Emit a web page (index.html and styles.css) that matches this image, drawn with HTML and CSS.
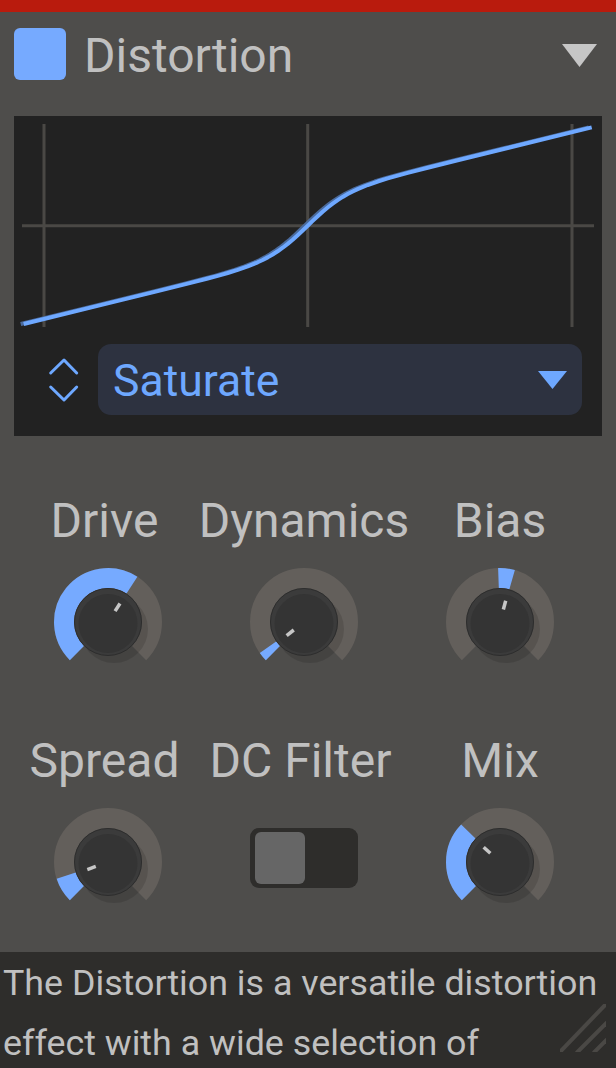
FILE: index.html
```html
<!DOCTYPE html>
<html lang="en">
<head>
<meta charset="utf-8">
<title>Distortion</title>
<link rel="stylesheet" href="styles.css">
</head>
<body>
<div class="topbar"></div>
<header class="header">
  <div class="swatch"></div>
  <h1 class="title">Distortion</h1>
  <svg class="collapse" viewBox="0 0 35 23"><polygon points="0,0 35,0 17.5,23"/></svg>
</header>

<section class="graph">
  <svg class="plot" viewBox="0 0 588 220">
    <g class="grid">
      <line x1="30" y1="8" x2="30" y2="211"/>
      <line x1="293.7" y1="8" x2="293.7" y2="211"/>
      <line x1="558" y1="8" x2="558" y2="211"/>
      <line x1="8" y1="109.7" x2="580" y2="109.7"/>
    </g>
    <polyline class="curve-ghost" transform="translate(-3 0)" points="9.7,207.98 93.7,187.4 143.7,175.12 173.7,167.66 193.7,162.52 203.7,159.82 213.7,156.97 223.7,153.87 233.7,150.38 243.7,146.3 248.7,143.96 253.7,141.36 258.7,138.48 263.7,135.28 268.7,131.74 273.7,127.86 278.7,123.66 283.7,119.18 288.7,114.5 293.7,109.7 298.7,104.9 303.7,100.22 308.7,95.74 313.7,91.54 318.7,87.66 323.7,84.12 328.7,80.92 333.7,78.04 338.7,75.44 343.7,73.1 353.7,69.02 363.7,65.53 373.7,62.43 383.7,59.58 393.7,56.88 413.7,51.74 443.7,44.28 493.7,32.0 577.7,11.42"/>
    <polyline class="curve" points="9.7,207.98 93.7,187.4 143.7,175.12 173.7,167.66 193.7,162.52 203.7,159.82 213.7,156.97 223.7,153.87 233.7,150.38 243.7,146.3 248.7,143.96 253.7,141.36 258.7,138.48 263.7,135.28 268.7,131.74 273.7,127.86 278.7,123.66 283.7,119.18 288.7,114.5 293.7,109.7 298.7,104.9 303.7,100.22 308.7,95.74 313.7,91.54 318.7,87.66 323.7,84.12 328.7,80.92 333.7,78.04 338.7,75.44 343.7,73.1 353.7,69.02 363.7,65.53 373.7,62.43 383.7,59.58 393.7,56.88 413.7,51.74 443.7,44.28 493.7,32.0 577.7,11.42"/>
  </svg>
  <div class="mode-row">
    <svg class="stepper" viewBox="0 0 32 48">
      <polyline points="2.7,17 16,4 28.7,17"/>
      <polyline points="2.7,31 16,44 28.7,31"/>
    </svg>
    <div class="select">
      <span class="select-text">Saturate</span>
      <svg class="select-arrow" viewBox="0 0 29 18"><polygon points="0,0 29,0 14.5,18"/></svg>
    </div>
  </div>
</section>

<section class="controls">
  <div class="control">
    <div class="label label-shift">Drive</div>
    <svg class="knob" viewBox="0 0 110 110">
      <path class="track" d="M23.89 86.11 A44 44 0 1 1 86.11 86.11"/>
      <path class="value" d="M23.89 86.11 A44 44 0 0 1 78.96 18.10"/>
      <circle class="shadow" cx="61" cy="62" r="34"/>
      <circle class="rim" cx="55" cy="55" r="33.5"/>
      <circle class="face" cx="55" cy="56.5" r="29.5"/>
      <line class="pointer" x1="62.08" y1="44.10" x2="66.98" y2="36.55"/>
    </svg>
  </div>
  <div class="control">
    <div class="label">Dynamics</div>
    <svg class="knob" viewBox="0 0 110 110">
      <path class="track" d="M23.89 86.11 A44 44 0 1 1 86.11 86.11"/>
      <path class="value" d="M23.89 86.11 A44 44 0 0 1 18.96 80.24"/>
      <circle class="shadow" cx="61" cy="62" r="34"/>
      <circle class="rim" cx="55" cy="55" r="33.5"/>
      <circle class="face" cx="55" cy="56.5" r="29.5"/>
      <line class="pointer" x1="44.76" y1="63.00" x2="37.66" y2="68.55"/>
    </svg>
  </div>
  <div class="control">
    <div class="label">Bias</div>
    <svg class="knob" viewBox="0 0 110 110">
      <path class="track" d="M23.89 86.11 A44 44 0 1 1 86.11 86.11"/>
      <path class="value" d="M53.46 11.03 A44 44 0 0 1 67.13 12.70"/>
      <circle class="shadow" cx="61" cy="62" r="34"/>
      <circle class="rim" cx="55" cy="55" r="33.5"/>
      <circle class="face" cx="55" cy="56.5" r="29.5"/>
      <line class="pointer" x1="58.36" y1="42.44" x2="60.69" y2="33.75"/>
    </svg>
  </div>
  <div class="control">
    <div class="label label-shift">Spread</div>
    <svg class="knob" viewBox="0 0 110 110">
      <path class="track" d="M23.89 86.11 A44 44 0 1 1 86.11 86.11"/>
      <path class="value" d="M23.89 86.11 A44 44 0 0 1 13.15 68.60"/>
      <circle class="shadow" cx="61" cy="62" r="34"/>
      <circle class="rim" cx="55" cy="55" r="33.5"/>
      <circle class="face" cx="55" cy="56.5" r="29.5"/>
      <line class="pointer" x1="42.78" y1="59.45" x2="34.33" y2="62.52"/>
    </svg>
  </div>
  <div class="control">
    <div class="label label-shift">DC Filter</div>
    <div class="toggle-wrap">
      <div class="toggle"><div class="thumb"></div></div>
    </div>
  </div>
  <div class="control">
    <div class="label">Mix</div>
    <svg class="knob" viewBox="0 0 110 110">
      <path class="track" d="M23.89 86.11 A44 44 0 1 1 86.11 86.11"/>
      <path class="value" d="M23.89 86.11 A44 44 0 0 1 23.35 24.43"/>
      <circle class="shadow" cx="61" cy="62" r="34"/>
      <circle class="rim" cx="55" cy="55" r="33.5"/>
      <circle class="face" cx="55" cy="56.5" r="29.5"/>
      <line class="pointer" x1="45.34" y1="46.30" x2="38.65" y2="40.28"/>
    </svg>
  </div>
</section>

<section class="desc">
  <p>The Distortion is a versatile distortion effect with a wide selection of</p>
  <svg class="grip" viewBox="0 0 46 48">
    <line x1="-1" y1="49" x2="47" y2="-1"/>
    <line x1="16.5" y1="49" x2="47" y2="18.3"/>
    <line x1="33.5" y1="49" x2="47" y2="35.3"/>
  </svg>
</section>
</body>
</html>
```

FILE: styles.css
```css
* {
  box-sizing: border-box;
  margin: 0;
  padding: 0;
}

html,
body {
  width: 616px;
  height: 1068px;
  overflow: hidden;
}

body {
  background: #4e4d4b;
  font-family: Roboto, "Liberation Sans", sans-serif;
  color: #c0c0c0;
}

.topbar {
  height: 12px;
  background: #b91b0d;
}

/* Header */
.header {
  display: flex;
  align-items: flex-start;
  padding: 16px 19px 0 14px;
  height: 68px;
}

.swatch {
  width: 52px;
  height: 52px;
  border-radius: 6px;
  background: #76aaff;
  flex-shrink: 0;
}

.title {
  flex: 1;
  margin-left: 18px;
  margin-top: 2px;
  font-size: 48px;
  font-weight: 400;
  line-height: 52px;
  color: #c0c0c0;
}

.collapse {
  width: 35px;
  height: 23px;
  margin-top: 16px;
  fill: #c6c6c6;
}

/* Graph */
.graph {
  margin: 36px 14px 0;
  height: 320px;
  background: #222222;
}

.plot {
  display: block;
  width: 588px;
  height: 220px;
}

.grid line {
  stroke: #4a4845;
  stroke-width: 3;
}

.curve,
.curve-ghost {
  fill: none;
  stroke-width: 4;
  stroke-linejoin: round;
}

.curve {
  stroke: #6ea8ff;
}

.curve-ghost {
  stroke: #4a6a9c;
}

.mode-row {
  display: flex;
  align-items: center;
  margin-top: 8px;
  height: 71px;
  padding-right: 20px;
}

.stepper {
  width: 32px;
  height: 48px;
  margin-left: 34px;
  margin-right: 18px;
  fill: none;
  stroke: #6ea8ff;
  stroke-width: 3;
  stroke-linecap: round;
  stroke-linejoin: round;
}

.select {
  flex: 1;
  height: 71px;
  border-radius: 13px;
  background: #2d3240;
  display: flex;
  align-items: center;
  justify-content: space-between;
  padding: 0 15px;
}

.select-text {
  font-size: 44.5px;
  color: #6ea8ff;
  margin-top: 3px;
}

.select-arrow {
  width: 29px;
  height: 18px;
  fill: #6ea8ff;
}

/* Controls */
.controls {
  display: grid;
  grid-template-columns: repeat(3, 196px);
  row-gap: 57.5px;
  padding: 58px 0 0 10px;
}

.control {
  display: flex;
  flex-direction: column;
  align-items: center;
}

.label {
  font-size: 48px;
  line-height: 54px;
  white-space: nowrap;
}

.label-shift {
  margin-right: 7px;
}

.knob {
  display: block;
  width: 110px;
  height: 110px;
  margin-top: 18.5px;
}

.track,
.value {
  fill: none;
  stroke-width: 20;
}

.track {
  stroke: #635f5b;
}

.value {
  stroke: #76aaff;
}

.shadow {
  fill: #000;
  opacity: 0.12;
}

.rim {
  fill: #3b3b3b;
  stroke: #2d2d2d;
  stroke-width: 1;
}

.face {
  fill: #343434;
}

.pointer {
  stroke: #c6c6c6;
  stroke-width: 3.5;
}

.toggle-wrap {
  height: 110px;
  margin-top: 18.5px;
  padding-top: 21.5px;
}

.toggle {
  width: 108px;
  height: 60px;
  border-radius: 9px;
  background: #2e2d2b;
  padding: 4px 4.5px;
}

.thumb {
  width: 50px;
  height: 52px;
  border-radius: 6px;
  background: #666666;
}

/* Description */
.desc {
  position: relative;
  margin-top: 35.5px;
  height: 200px;
  background: #2e2d2b;
  padding: 1px 0 0 3px;
}

.desc p {
  font-size: 35.8px;
  line-height: 60px;
  color: #c0c0c0;
}

.grip {
  position: absolute;
  right: 10px;
  top: 52px;
  width: 46px;
  height: 48px;
}

.grip line {
  stroke: #4a4845;
  stroke-width: 4;
}
```
